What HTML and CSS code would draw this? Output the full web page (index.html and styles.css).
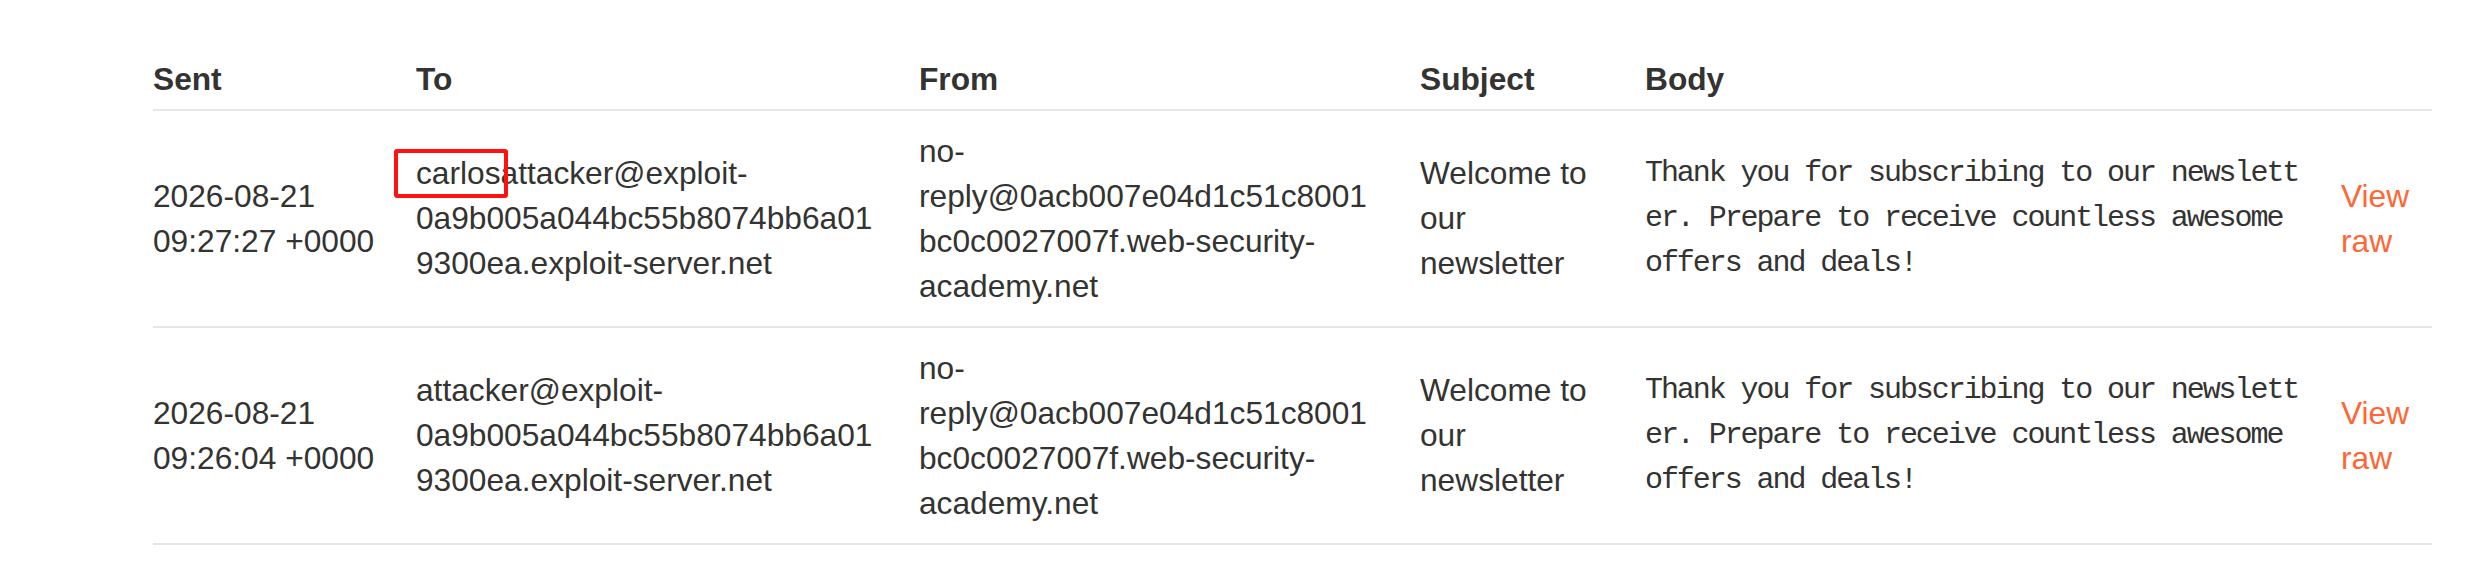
FILE: index.html
```html
<!DOCTYPE html>
<html lang="en">
<head>
<meta charset="utf-8">
<title>Email client</title>
<link rel="stylesheet" href="styles.css">
</head>
<body>
<div class="page">
  <table class="emails">
    <colgroup>
      <col class="c-sent">
      <col class="c-to">
      <col class="c-from">
      <col class="c-subject">
      <col class="c-body">
      <col class="c-raw">
    </colgroup>
    <thead>
      <tr>
        <th>Sent</th>
        <th>To</th>
        <th>From</th>
        <th>Subject</th>
        <th>Body</th>
        <th></th>
      </tr>
    </thead>
    <tbody>
      <tr>
        <td>2026-08-21 09:27:27 +0000</td>
        <td class="addr">carlosattacker@exploit-0a9b005a044bc55b8074bb6a019300ea.exploit-server.net</td>
        <td class="addr">no-reply@0acb007e04d1c51c8001bc0c0027007f.web-security-academy.net</td>
        <td>Welcome to our newsletter</td>
        <td><div class="body-text">Thank you for subscribing to our newsletter. Prepare to receive countless awesome offers and deals!</div></td>
        <td><a class="raw" href="#">View raw</a></td>
      </tr>
      <tr>
        <td>2026-08-21 09:26:04 +0000</td>
        <td class="addr">attacker@exploit-0a9b005a044bc55b8074bb6a019300ea.exploit-server.net</td>
        <td class="addr">no-reply@0acb007e04d1c51c8001bc0c0027007f.web-security-academy.net</td>
        <td>Welcome to our newsletter</td>
        <td><div class="body-text">Thank you for subscribing to our newsletter. Prepare to receive countless awesome offers and deals!</div></td>
        <td><a class="raw" href="#">View raw</a></td>
      </tr>
    </tbody>
  </table>
  <div class="highlight"></div>
</div>
</body>
</html>
```

FILE: styles.css
```css
html, body {
  margin: 0;
  padding: 0;
  background: #ffffff;
}

.page {
  position: relative;
  padding: 57px 0 0 153px;
  font-family: "Liberation Sans", Arial, sans-serif;
  font-size: 31.7px;
  line-height: 45px;
  color: #333332;
}

.emails {
  width: 2279px;
  table-layout: fixed;
  border-collapse: collapse;
  border-spacing: 0;
}

.c-sent { width: 263px; }
.c-to { width: 503px; }
.c-from { width: 501px; }
.c-subject { width: 225px; }
.c-body { width: 696px; }
.c-raw { width: 91px; }

.emails th {
  text-align: left;
  font-weight: bold;
  padding: 0 40px 7px 0;
  border-bottom: 2px solid #e6e6e6;
  vertical-align: bottom;
}

.emails td {
  padding: 17.5px 40px 17.5px 0;
  border-bottom: 2px solid #e6e6e6;
  vertical-align: middle;
}

.emails td:last-child,
.emails th:last-child {
  padding-right: 0;
}

.addr {
  overflow-wrap: anywhere;
}

.body-text {
  font-family: "Liberation Mono", "Courier New", monospace;
  font-size: 30px;
  letter-spacing: -2.07px;
  line-height: 45px;
  word-break: break-all;
  color: #333332;
}

.raw {
  color: #ff6633;
  text-decoration: none;
}

.highlight {
  position: absolute;
  left: 394px;
  top: 149px;
  width: 114px;
  height: 49px;
  box-sizing: border-box;
  border: 4px solid #ff1111;
  border-radius: 3px;
}
```
